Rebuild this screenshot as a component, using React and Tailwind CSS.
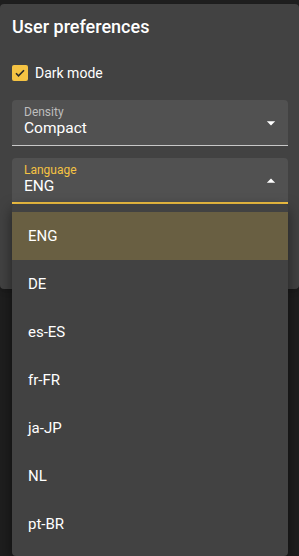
import { useState } from "react";

const languages = ["ENG", "DE", "es-ES", "fr-FR", "ja-JP", "NL", "pt-BR"];

const Arrow = ({ up }) => (
  <svg width="20" height="20" viewBox="0 0 24 24" className="mt-2 shrink-0 fill-white">
    <path d={up ? "M7 14l5-5 5 5z" : "M7 10l5 5 5-5z"} />
  </svg>
);

const Field = ({ label, value, focused }) => (
  <div
    className={`flex h-[46px] items-start rounded-t bg-[#515151] pl-3 pr-[7px] pt-[5px] ${
      focused ? "border-b-2 border-[#f5c343]" : "border-b border-[#c8c8c8]"
    }`}
  >
    <div className="flex flex-1 flex-col">
      <span
        className={`text-[12px] leading-[14px] ${
          focused ? "text-[#f5c343]" : "text-[#bdbdbd]"
        }`}
      >
        {label}
      </span>
      <span className="text-[15.5px] leading-[19px] text-white">{value}</span>
    </div>
    <Arrow up={focused} />
  </div>
);

export default function App() {
  const [dark, setDark] = useState(true);
  const [lang, setLang] = useState("ENG");

  return (
    <div
      className="relative h-[556px] overflow-hidden bg-[#1e1e1e] pt-1"
      style={{ fontFamily: "Roboto, 'Noto Sans', sans-serif" }}
    >
      <div className="h-[285px] rounded bg-[#424242] pl-3 pr-[11px] pt-[11px] shadow-md">
        <h2 className="text-[18px] font-medium leading-[24px] text-white">
          User preferences
        </h2>

        <label className="mt-[26px] flex cursor-pointer items-center gap-[7px]">
          <span
            onClick={() => setDark(!dark)}
            className="flex h-4 w-4 items-center justify-center rounded-[2px] bg-[#f5c343]"
          >
            {dark && (
              <svg width="12" height="12" viewBox="0 0 24 24" className="fill-none stroke-[#2a2a2a]">
                <path d="M4 12.5l5 5L20 6.5" strokeWidth="3.2" />
              </svg>
            )}
          </span>
          <span className="text-[14px] leading-[16px] text-white">Dark mode</span>
        </label>

        <div className="mt-[19px] flex flex-col gap-3">
          <Field label="Density" value="Compact" />
          <Field label="Language" value={lang} focused />
        </div>
      </div>

      <ul className="absolute left-3 right-[11px] top-[204px] rounded bg-[#424242] py-2 shadow-[0_5px_14px_rgba(0,0,0,0.5)]">
        {languages.map((l) => (
          <li
            key={l}
            onClick={() => setLang(l)}
            className={`flex h-12 cursor-pointer items-center px-4 text-[15px] text-white ${
              l === lang ? "bg-[#695f42]" : ""
            }`}
          >
            {l}
          </li>
        ))}
      </ul>
    </div>
  );
}
